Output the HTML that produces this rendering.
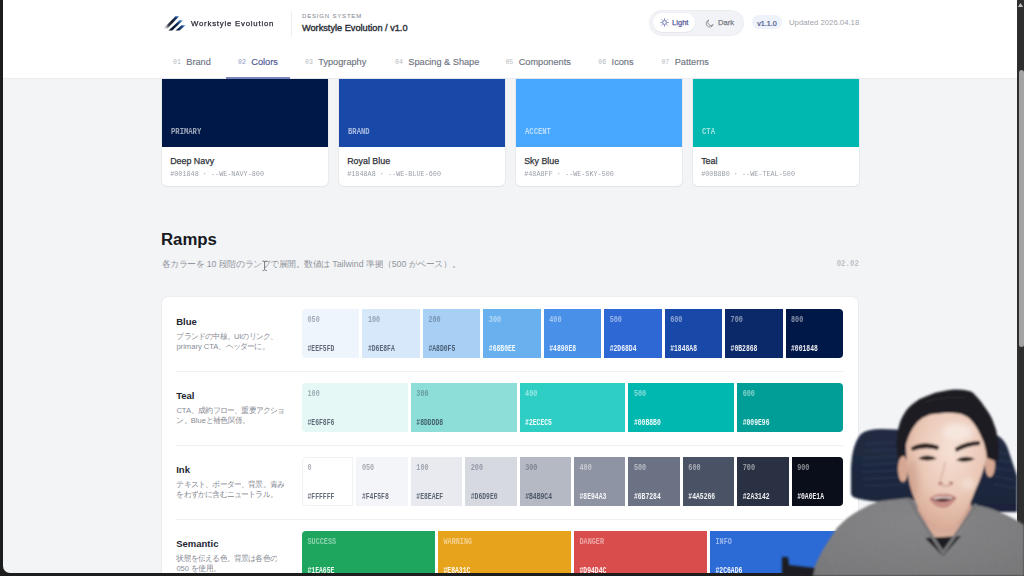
<!DOCTYPE html>
<html><head><meta charset="utf-8">
<style>
*{margin:0;padding:0;box-sizing:border-box}
html,body{width:1024px;height:576px;overflow:hidden;background:#f3f4f6}
body{font-family:"Liberation Sans",sans-serif;position:relative}
.a{position:absolute}
.mono{font-family:"Liberation Mono",monospace}
.t{white-space:nowrap;line-height:1}
i{display:inline-block;font-style:normal;text-align:center;overflow:hidden;vertical-align:top}
.md{font-weight:normal;-webkit-text-stroke:.32px currentColor}
#hdr{left:0;top:0;width:1017px;height:79px;background:#fff;border-bottom:1px solid #eaecf0}
.card{background:#fff;border-radius:0 0 5px 5px;box-shadow:0 0 0 1px rgba(20,30,60,.035),0 1px 2px rgba(20,30,60,.04)}
.sw{position:absolute;left:0;top:0;width:100%;height:68.2px}
.cl{position:absolute;left:9px;top:48.7px;transform:scaleY(1.25);transform-origin:0 0;font-size:7.2px;font-weight:bold;color:rgba(255,255,255,.62)}
.cn{position:absolute;left:8.2px;top:78px;font-size:8.9px;font-weight:normal;-webkit-text-stroke:.25px currentColor;color:#30333b}
.cm{position:absolute;left:8.2px;top:91.3px;font-size:6.8px;color:#999ea7;transform:scaleY(1.15);transform-origin:0 0}
.tab{font-size:9.2px;color:#6f7482;font-weight:normal;-webkit-text-stroke:.15px currentColor}
.tab .n{font-family:"Liberation Mono",monospace;font-size:6.5px;color:#b4b8c1;font-weight:normal;-webkit-text-stroke:0;margin-right:5.5px;vertical-align:1.5px}
#ramps{left:162px;top:297px;width:696px;height:320px;background:#fff;border-radius:6px;box-shadow:0 0 0 1px rgba(20,30,60,.03),0 1px 2px rgba(20,30,60,.03)}
.rt{position:absolute;left:14.2px;font-size:9.5px;font-weight:bold;color:#22262f}
.rd{position:absolute;left:14.4px;font-size:7.6px;line-height:10.5px;color:#878c96;white-space:nowrap}
.sep{position:absolute;left:14px;width:667px;height:1px;background:#eef0f3}
.strip{position:absolute;left:140px;width:541px;height:48.5px;display:flex;gap:3px}
.strip>div{position:relative;flex:1}
.strip>div:first-child{border-radius:4px 0 0 4px}
.strip>div:last-child{border-radius:0 4px 4px 0}
.sl{position:absolute;left:5.5px;top:7.3px;transform:scaleY(1.25);transform-origin:0 0;font-family:"Liberation Mono",monospace;font-size:6.8px;font-weight:bold;line-height:1;white-space:nowrap}
.sh{position:absolute;left:5.5px;top:37px;transform:scaleY(1.3);transform-origin:0 0;font-family:"Liberation Mono",monospace;font-size:6.4px;font-weight:bold;line-height:1;white-space:nowrap}
.dk .sl{color:rgba(40,50,70,.38)}
.dk .sh{color:rgba(40,50,70,.72)}
.lt .sl{color:rgba(255,255,255,.5)}
.lt .sh{color:rgba(255,255,255,.92)}
#frame{left:3px;top:-20px;width:1100px;height:593px;border-bottom-left-radius:7px;box-shadow:0 0 0 40px #1d1d1d;pointer-events:none}
#sb{left:1017px;top:0;width:7px;height:576px;background:#2e2e2e}
#thumb{left:1018.5px;top:70px;width:5.5px;height:277px;background:#a3a3a3;border-radius:3px}
</style></head><body>

<div id="hdr" class="a"></div>
<!-- logo -->
<svg class="a" style="left:160px;top:12px" width="30" height="22" viewBox="0 0 30 22">
  <defs>
    <linearGradient id="lg1" gradientUnits="userSpaceOnUse" x1="4" y1="17" x2="19" y2="4">
      <stop offset="0" stop-color="#c8ccd4" stop-opacity=".3"/>
      <stop offset=".3" stop-color="#3a3f4c"/>
      <stop offset=".55" stop-color="#151a28"/>
      <stop offset=".85" stop-color="#1d3f78"/>
      <stop offset="1" stop-color="#4d9be8"/>
    </linearGradient>
    <linearGradient id="lg2" gradientUnits="userSpaceOnUse" x1="9" y1="19" x2="23" y2="8">
      <stop offset="0" stop-color="#10141f"/>
      <stop offset=".6" stop-color="#0f2450"/>
      <stop offset="1" stop-color="#5aa6ee"/>
    </linearGradient>
    <linearGradient id="lg3" gradientUnits="userSpaceOnUse" x1="16" y1="19" x2="26" y2="13">
      <stop offset="0" stop-color="#0e1424"/>
      <stop offset=".6" stop-color="#173f80"/>
      <stop offset="1" stop-color="#5aa6ee"/>
    </linearGradient>
  </defs>
  <path d="M3.5,16.5 L15.5,4.2 L19.2,4.2 L7.5,16.5 Z" fill="url(#lg1)"/>
  <path d="M8.5,18.5 L19.5,8.2 L23,8.2 L12.3,18.5 Z" fill="url(#lg2)"/>
  <path d="M15.5,18.5 L21.5,13.2 L25.5,13.2 L19.5,18.5 Z" fill="url(#lg3)"/>
</svg>
<div class="a t" style="left:190.5px;top:19.5px;font-size:7.5px;color:#2a2e38;letter-spacing:.75px;-webkit-text-stroke:.25px currentColor;transform:scaleX(1.04);transform-origin:0 0">Workstyle Evolution</div>
<div class="a" style="left:291px;top:10.5px;width:1px;height:26.5px;background:#eceef1"></div>
<div class="a t" style="left:302px;top:13.2px;font-size:6px;color:#8e939c;letter-spacing:.82px;-webkit-text-stroke:.1px currentColor">DESIGN SYSTEM</div>
<div class="a t" style="left:302px;top:24.4px;font-size:9.2px;color:#2a2e37;-webkit-text-stroke:.38px currentColor">Workstyle Evolution / v1.0</div>

<!-- toggle -->
<div class="a" style="left:650px;top:10.5px;width:93px;height:24px;border-radius:12px;background:#f2f3f6;box-shadow:0 0 0 1px #eceef2"></div>
<div class="a" style="left:652.5px;top:13.3px;width:42.5px;height:18.5px;border-radius:9.5px;background:#fff;box-shadow:0 1px 1.5px rgba(0,0,0,.06)"></div>
<svg class="a" style="left:659.5px;top:18px" width="9" height="9" viewBox="0 0 9 9"><circle cx="4.5" cy="4.5" r="1.9" fill="none" stroke="#6f77b0" stroke-width="1"/><g stroke="#6f77b0" stroke-width=".85" stroke-linecap="round"><path d="M4.5 .7v.8M4.5 7.5v.8M.7 4.5h.8M7.5 4.5h.8M1.8 1.8l.55.55M6.65 6.65l.55.55M1.8 7.2l.55-.55M6.65 2.35l.55-.55"/></g></svg>
<div class="a t" style="left:672px;top:19.2px;font-size:7.6px;-webkit-text-stroke:.25px currentColor;color:#58609c">Light</div>
<svg class="a" style="left:705px;top:18.5px" width="9" height="9" viewBox="0 0 9 9"><path d="M3.8 1 A3.6 3.6 0 1 0 8.2 5.6 A3.1 3.1 0 0 1 3.8 1 Z" fill="none" stroke="#80848e" stroke-width=".85"/></svg>
<div class="a t" style="left:718px;top:19.2px;font-size:7.6px;-webkit-text-stroke:.25px currentColor;color:#777b86">Dark</div>

<div class="a" style="left:752px;top:15.4px;width:30px;height:14px;border-radius:7px;background:#edf2fb"></div>
<div class="a t" style="left:757.2px;top:19.5px;font-size:7.2px;-webkit-text-stroke:.22px currentColor;color:#505a8e">v1.1.0</div>
<div class="a t" style="left:789px;top:19.3px;font-size:7.75px;color:#9fa4ac">Updated 2026.04.18</div>

<div class="a t tab" style="left:173px;top:58px"><span class="n">01</span><span>Brand</span></div><div class="a t tab" style="left:238px;top:58px"><span class="n" style="color:#8f96c4">02</span><span style="color:#4b5593">Colors</span></div><div class="a t tab" style="left:305px;top:58px"><span class="n">03</span><span>Typography</span></div><div class="a t tab" style="left:395px;top:58px"><span class="n">04</span><span>Spacing &amp; Shape</span></div><div class="a t tab" style="left:505.4px;top:58px"><span class="n">05</span><span>Components</span></div><div class="a t tab" style="left:598.3px;top:58px"><span class="n">06</span><span>Icons</span></div><div class="a t tab" style="left:661.4px;top:58px"><span class="n">07</span><span>Patterns</span></div>
<div class="a" style="left:226px;top:76.5px;width:64px;height:2px;background:#7b86bf"></div>

<div class="a card" style="left:162px;top:79px;width:165.5px;height:106.7px"><div class="sw" style="background:#001848"></div><span class="cl mono t">PRIMARY</span><span class="cn t">Deep Navy</span><span class="cm mono t">#001848 · --WE-NAVY-800</span></div><div class="a card" style="left:339px;top:79px;width:165.5px;height:106.7px"><div class="sw" style="background:#1848A8"></div><span class="cl mono t">BRAND</span><span class="cn t">Royal Blue</span><span class="cm mono t">#1848A8 · --WE-BLUE-600</span></div><div class="a card" style="left:516px;top:79px;width:165.5px;height:106.7px"><div class="sw" style="background:#48A8FF"></div><span class="cl mono t">ACCENT</span><span class="cn t">Sky Blue</span><span class="cm mono t">#48A8FF · --WE-SKY-500</span></div><div class="a card" style="left:693px;top:79px;width:165.5px;height:106.7px"><div class="sw" style="background:#00B8B0"></div><span class="cl mono t">CTA</span><span class="cn t">Teal</span><span class="cm mono t">#00B8B0 · --WE-TEAL-500</span></div>

<div class="a t" style="left:161px;top:231.7px;font-size:16.8px;font-weight:bold;color:#17191f">Ramps</div>
<div class="a t" style="left:161.5px;top:259.6px;font-size:8.8px;color:#8f949d"><i style="width:8.55px">各</i><i style="width:8.55px">カ</i><i style="width:8.55px">ラ</i><i style="width:8.55px">ー</i><i style="width:8.55px">を</i> 10 <i style="width:8.55px">段</i><i style="width:8.55px">階</i><i style="width:8.55px">の</i><i style="width:8.55px">ラ</i><i style="width:8.55px">ン</i><i style="width:8.55px">プ</i><i style="width:8.55px">で</i><i style="width:8.55px">展</i><i style="width:8.55px">開</i><i style="width:8.55px">。</i><i style="width:8.55px">数</i><i style="width:8.55px">値</i><i style="width:8.55px">は</i> Tailwind <i style="width:8.55px">準</i><i style="width:8.55px">拠</i><i style="width:8.55px">（</i>500 <i style="width:8.55px">が</i><i style="width:8.55px">ベ</i><i style="width:8.55px">ー</i><i style="width:8.55px">ス</i><i style="width:8.55px">）</i><i style="width:8.55px">。</i></div>
<div class="a t mono" style="left:836.7px;top:260.4px;font-size:7.4px;font-weight:bold;color:#bcc0c8;transform:scaleY(1.25);transform-origin:0 0">02.02</div>

<svg class="a" style="left:261px;top:259px" width="8" height="13" viewBox="0 0 8 13"><path d="M1.5 2 Q3 2 3.6 2.8 Q4.2 2 5.8 2 M3.6 2.8 V10.8 M1.5 11.6 Q3 11.6 3.6 10.8 Q4.2 11.6 5.8 11.6" stroke="#6a6d73" stroke-width=".9" fill="none"/></svg>
<div id="ramps" class="a">
<div class="rt t" style="top:19.7px">Blue</div><div class="rd" style="top:34.5px"><i style="width:7.2px">ブ</i><i style="width:7.2px">ラ</i><i style="width:7.2px">ン</i><i style="width:7.2px">ド</i><i style="width:7.2px">の</i><i style="width:7.2px">中</i><i style="width:7.2px">核</i><i style="width:7.2px">。</i>UI<i style="width:7.2px">の</i><i style="width:7.2px">リ</i><i style="width:7.2px">ン</i><i style="width:7.2px">ク</i><i style="width:7.2px">、</i><br>primary CTA<i style="width:7.2px">、</i><i style="width:7.2px">ヘ</i><i style="width:7.2px">ッ</i><i style="width:7.2px">ダ</i><i style="width:7.2px">ー</i><i style="width:7.2px">に</i><i style="width:7.2px">。</i></div><div class="strip" style="top:12px"><div class="dk" style="background:#EEF5FD"><span class="sl">050</span><span class="sh">#EEF5FD</span></div><div class="dk" style="background:#D6E8FA"><span class="sl">100</span><span class="sh">#D6E8FA</span></div><div class="dk" style="background:#A8D0F5"><span class="sl">200</span><span class="sh">#A8D0F5</span></div><div class="lt" style="background:#68B0EE"><span class="sl">300</span><span class="sh">#68B0EE</span></div><div class="lt" style="background:#4890E8"><span class="sl">400</span><span class="sh">#4890E8</span></div><div class="lt" style="background:#2D68D4"><span class="sl">500</span><span class="sh">#2D68D4</span></div><div class="lt" style="background:#1848A8"><span class="sl">600</span><span class="sh">#1848A8</span></div><div class="lt" style="background:#0B2868"><span class="sl">700</span><span class="sh">#0B2868</span></div><div class="lt" style="background:#001848"><span class="sl">800</span><span class="sh">#001848</span></div></div><div class="sep" style="top:73.5px"></div><div class="rt t" style="top:93.7px">Teal</div><div class="rd" style="top:108.5px">CTA<i style="width:7.2px">、</i><i style="width:7.2px">成</i><i style="width:7.2px">約</i><i style="width:7.2px">フ</i><i style="width:7.2px">ロ</i><i style="width:7.2px">ー</i><i style="width:7.2px">、</i><i style="width:7.2px">重</i><i style="width:7.2px">要</i><i style="width:7.2px">ア</i><i style="width:7.2px">ク</i><i style="width:7.2px">シ</i><i style="width:7.2px">ョ</i><br><i style="width:7.2px">ン</i><i style="width:7.2px">。</i>Blue<i style="width:7.2px">と</i><i style="width:7.2px">補</i><i style="width:7.2px">色</i><i style="width:7.2px">関</i><i style="width:7.2px">係</i><i style="width:7.2px">。</i></div><div class="strip" style="top:86px"><div class="dk" style="background:#E6F8F6"><span class="sl">100</span><span class="sh">#E6F8F6</span></div><div class="dk" style="background:#8DDDD8"><span class="sl">300</span><span class="sh">#8DDDD8</span></div><div class="lt" style="background:#2ECEC5"><span class="sl">400</span><span class="sh">#2ECEC5</span></div><div class="lt" style="background:#00B8B0"><span class="sl">500</span><span class="sh">#00B8B0</span></div><div class="lt" style="background:#009E96"><span class="sl">600</span><span class="sh">#009E96</span></div></div><div class="sep" style="top:147.5px"></div><div class="rt t" style="top:167.7px">Ink</div><div class="rd" style="top:182.5px"><i style="width:7.2px">テ</i><i style="width:7.2px">キ</i><i style="width:7.2px">ス</i><i style="width:7.2px">ト</i><i style="width:7.2px">、</i><i style="width:7.2px">ボ</i><i style="width:7.2px">ー</i><i style="width:7.2px">ダ</i><i style="width:7.2px">ー</i><i style="width:7.2px">、</i><i style="width:7.2px">背</i><i style="width:7.2px">景</i><i style="width:7.2px">。</i><i style="width:7.2px">青</i><i style="width:7.2px">み</i><br><i style="width:7.2px">を</i><i style="width:7.2px">わ</i><i style="width:7.2px">ず</i><i style="width:7.2px">か</i><i style="width:7.2px">に</i><i style="width:7.2px">含</i><i style="width:7.2px">む</i><i style="width:7.2px">ニ</i><i style="width:7.2px">ュ</i><i style="width:7.2px">ー</i><i style="width:7.2px">ト</i><i style="width:7.2px">ラ</i><i style="width:7.2px">ル</i><i style="width:7.2px">。</i></div><div class="strip" style="top:160px"><div class="dk" style="background:#FFFFFF;box-shadow:inset 0 0 0 1px #f1f2f5"><span class="sl">0</span><span class="sh">#FFFFFF</span></div><div class="dk" style="background:#F4F5F8"><span class="sl">050</span><span class="sh">#F4F5F8</span></div><div class="dk" style="background:#E8EAEF"><span class="sl">100</span><span class="sh">#E8EAEF</span></div><div class="dk" style="background:#D6D9E0"><span class="sl">200</span><span class="sh">#D6D9E0</span></div><div class="dk" style="background:#B4B9C4"><span class="sl">300</span><span class="sh">#B4B9C4</span></div><div class="lt" style="background:#8E94A3"><span class="sl">400</span><span class="sh">#8E94A3</span></div><div class="lt" style="background:#6B7284"><span class="sl">500</span><span class="sh">#6B7284</span></div><div class="lt" style="background:#4A5266"><span class="sl">600</span><span class="sh">#4A5266</span></div><div class="lt" style="background:#2A3142"><span class="sl">700</span><span class="sh">#2A3142</span></div><div class="lt" style="background:#0A0E1A"><span class="sl">900</span><span class="sh">#0A0E1A</span></div></div><div class="sep" style="top:221.5px"></div><div class="rt t" style="top:241.7px">Semantic</div><div class="rd" style="top:256.5px"><i style="width:7.2px">状</i><i style="width:7.2px">態</i><i style="width:7.2px">を</i><i style="width:7.2px">伝</i><i style="width:7.2px">え</i><i style="width:7.2px">る</i><i style="width:7.2px">色</i><i style="width:7.2px">。</i><i style="width:7.2px">背</i><i style="width:7.2px">景</i><i style="width:7.2px">は</i><i style="width:7.2px">各</i><i style="width:7.2px">色</i><i style="width:7.2px">の</i><br>050 <i style="width:7.2px">を</i><i style="width:7.2px">使</i><i style="width:7.2px">用</i><i style="width:7.2px">。</i></div><div class="strip" style="top:234px"><div class="lt" style="background:#1EA65E"><span class="sl">SUCCESS</span><span class="sh">#1EA65E</span></div><div class="lt" style="background:#E8A31C"><span class="sl">WARNING</span><span class="sh">#E8A31C</span></div><div class="lt" style="background:#D94D4C"><span class="sl">DANGER</span><span class="sh">#D94D4C</span></div><div class="lt" style="background:#2C6AD6"><span class="sl">INFO</span><span class="sh">#2C6AD6</span></div></div>
</div>

<div id="frame" class="a"></div>
<div id="sb" class="a"></div>
<div id="thumb" class="a"></div>
<svg class="a" style="left:1017px;top:2px" width="7" height="6" viewBox="0 0 7 6"><path d="M3.5 1 L6.2 5 L0.8 5 Z" fill="#bdbdbd"/></svg>

<!-- person -->
<svg class="a" style="left:0;top:0" width="1024" height="576" viewBox="0 0 1024 576">
<defs>
  <filter id="bl" x="-5%" y="-5%" width="110%" height="110%"><feGaussianBlur stdDeviation="0.9"/></filter>
  <filter id="bl2" x="-50%" y="-50%" width="200%" height="200%"><feGaussianBlur stdDeviation="3"/></filter>
  <filter id="tex" x="0" y="0" width="100%" height="100%">
    <feTurbulence type="fractalNoise" baseFrequency="0.9" numOctaves="2" seed="3"/>
    <feColorMatrix values="0 0 0 0 0  0 0 0 0 0  0 0 0 0 0  0 0 0 .35 0"/>
    <feComposite in2="SourceGraphic" operator="in"/>
  </filter>
  <radialGradient id="face" cx="0.55" cy="0.35" r="0.7">
    <stop offset="0" stop-color="#f6e0d4"/>
    <stop offset="0.55" stop-color="#ebc9b8"/>
    <stop offset="1" stop-color="#d6a892"/>
  </radialGradient>
  <linearGradient id="chair" x1="0" y1="0" x2="0" y2="1">
    <stop offset="0" stop-color="#222c44"/>
    <stop offset="1" stop-color="#1b243a"/>
  </linearGradient>
  <radialGradient id="sw" cx="0.5" cy="0.3" r="0.8">
    <stop offset="0" stop-color="#919193"/>
    <stop offset="1" stop-color="#838385"/>
  </radialGradient>
  <linearGradient id="neck" x1="0" y1="0" x2="0" y2="1">
    <stop offset="0" stop-color="#c9998a"/>
    <stop offset="1" stop-color="#e0b8a4"/>
  </linearGradient>
<clipPath id="cs"><path d="M810,576 L815,566 Q821,552 826,545 Q832,535 837,528 Q848,516 860,510 Q870,504 880,501 L908,498 Q928,504 944,510 L976,505 Q992,508 1004,514 Q1016,519 1024,525 L1024,576 Z"/></clipPath><clipPath id="cf"><path d="M906,440 Q906,472 911,489 Q918,512 931,523 Q942,531 954,526 Q967,514 975,491 Q983,474 987,456 Q988,425 968,412 Q945,404 922,414 Q906,424 906,440 Z"/></clipPath>
</defs>
<g filter="url(#bl)">
  <!-- chair -->
  <path d="M851,494 L851,468 Q852,444 861,434 Q867,429 882,429 L990,433 Q1003,435 1008,449 L1017,476 L1017,512 L960,512 L880,502 Q860,500 853,497 Z" fill="url(#chair)"/>
  <g stroke="#34405a" stroke-width="1" opacity=".75">
    <path d="M866,444 L898,442 M865,451 L898,449 M864,458 L898,456 M863,465 L899,463 M863,472 L901,470 M863,479 L905,477 M864,486 L910,484"/>
    <path d="M996,452 L1009,454 M996,460 L1011,462 M996,468 L1013,471 M995,476 L1014,480 M994,484 L1015,488"/>
  </g>
  <!-- sweater -->
  <path d="M810,576 L815,566 Q821,552 826,545 Q832,535 837,528 Q848,516 860,510 Q870,504 880,501 L908,498 Q928,504 944,510 L976,505 Q992,508 1004,514 Q1016,519 1024,525 L1024,576 Z" fill="url(#sw)"/>
  <g clip-path="url(#cs)"><rect x="806" y="498" width="218" height="78" fill="#000" filter="url(#tex)" opacity=".45"/></g>
  <!-- neck -->
  <path d="M919,500 L970,500 L972,512 Q960,536 944,550 Q930,536 917,512 Z" fill="url(#neck)"/>
  <!-- inner shirt -->
  <path d="M925,538 L961,536 L943,556 Z" fill="#1a1c22"/>
  <!-- v collar -->
  <path d="M909,499 Q926,528 943,553 Q960,530 976,504" stroke="#77777a" stroke-width="3.2" fill="none"/>
  <!-- ears -->
  <ellipse cx="903" cy="469" rx="5" ry="13" fill="#d6a893"/>
  <ellipse cx="990" cy="465" rx="5" ry="12" fill="#d6a893"/>
  <!-- face -->
  <path d="M906,440 Q906,472 911,489 Q918,512 931,523 Q942,531 954,526 Q967,514 975,491 Q983,474 987,456 Q988,425 968,412 Q945,404 922,414 Q906,424 906,440 Z" fill="url(#face)"/>
  <g clip-path="url(#cf)"><ellipse cx="958" cy="432" rx="16" ry="9" fill="#f7ebe4" filter="url(#bl2)" opacity=".8"/>
  <ellipse cx="968" cy="484" rx="7" ry="6" fill="#f7ebe4" filter="url(#bl2)" opacity=".6"/>
  <ellipse cx="912" cy="480" rx="6" ry="20" fill="#c49583" filter="url(#bl2)" opacity=".5"/></g>
  <!-- hair -->
  <path d="M898,460 Q895,442 898,430 Q900,420 904,414 Q908,407 914,403 Q920,398 927,396 Q935,392 944,391 Q951,389 957,389.5 Q965,389.5 971,391.5 Q974,393 976,396 Q981,401 984,406 Q990,414 992.5,420 Q997,430 998,440 Q999.5,450 998,462 L987,458 Q986,450 984,443 Q981,436 978,430 Q974,423 970,419 Q964,414 958,413.5 Q950,412.5 944,413 Q936,413.5 930,414.5 Q923,417 918,421.5 Q912,428 908.5,437 Q905,445 903.5,455 Z" fill="#1f1e22"/>
  <path d="M925,402 Q945,396 965,398" stroke="#3a393e" stroke-width="1.2" fill="none" opacity=".6"/>
  <!-- brows -->
  <path d="M911,447.5 Q924,440 939,446 L938,450 Q925,446 912,451 Z" fill="#2e2420"/>
  <path d="M955,448 Q966,441 980,441 L980,445 Q967,446 956,452 Z" fill="#2e2420"/>
  <!-- eyes -->
  <path d="M918,458.5 Q927,452.5 937,458.5 Q927,462.5 918,458.5 Z" fill="#2a201c"/>
  <path d="M956,460 Q965,454 975,459 Q965,464 956,460 Z" fill="#2a201c"/>
  <!-- nose -->
  <path d="M945,462 Q943,474 940,480" stroke="#cf9f8c" stroke-width="1.4" fill="none" opacity=".7"/>
  <ellipse cx="940.5" cy="483" rx="2.2" ry="1.3" fill="#a87565"/>
  <ellipse cx="951" cy="483" rx="2.2" ry="1.3" fill="#a87565"/>
  <path d="M938,484 Q946,488 953,484" stroke="#c48f7d" stroke-width="1" fill="none"/>
  <!-- mouth -->
  <path d="M929,499 Q936,493 943,494 Q950,493 957,498 Q950,508 943,508 Q935,508 929,499 Z" fill="#c98d86"/>
  <path d="M931,499 Q943,494 955,498 Q943,505 931,499 Z" fill="#4a2323"/>
  <path d="M933,498 Q943,495.5 953,497.5 L952,499 Q943,497.5 934,499.5 Z" fill="#efe2dc"/>
  <!-- stand -->
  <path d="M782,557 L788,557 L789,565 L815,568 L813,576 L782,576 Z" fill="#1d1e22"/>
</g>
</svg>


</body></html>
